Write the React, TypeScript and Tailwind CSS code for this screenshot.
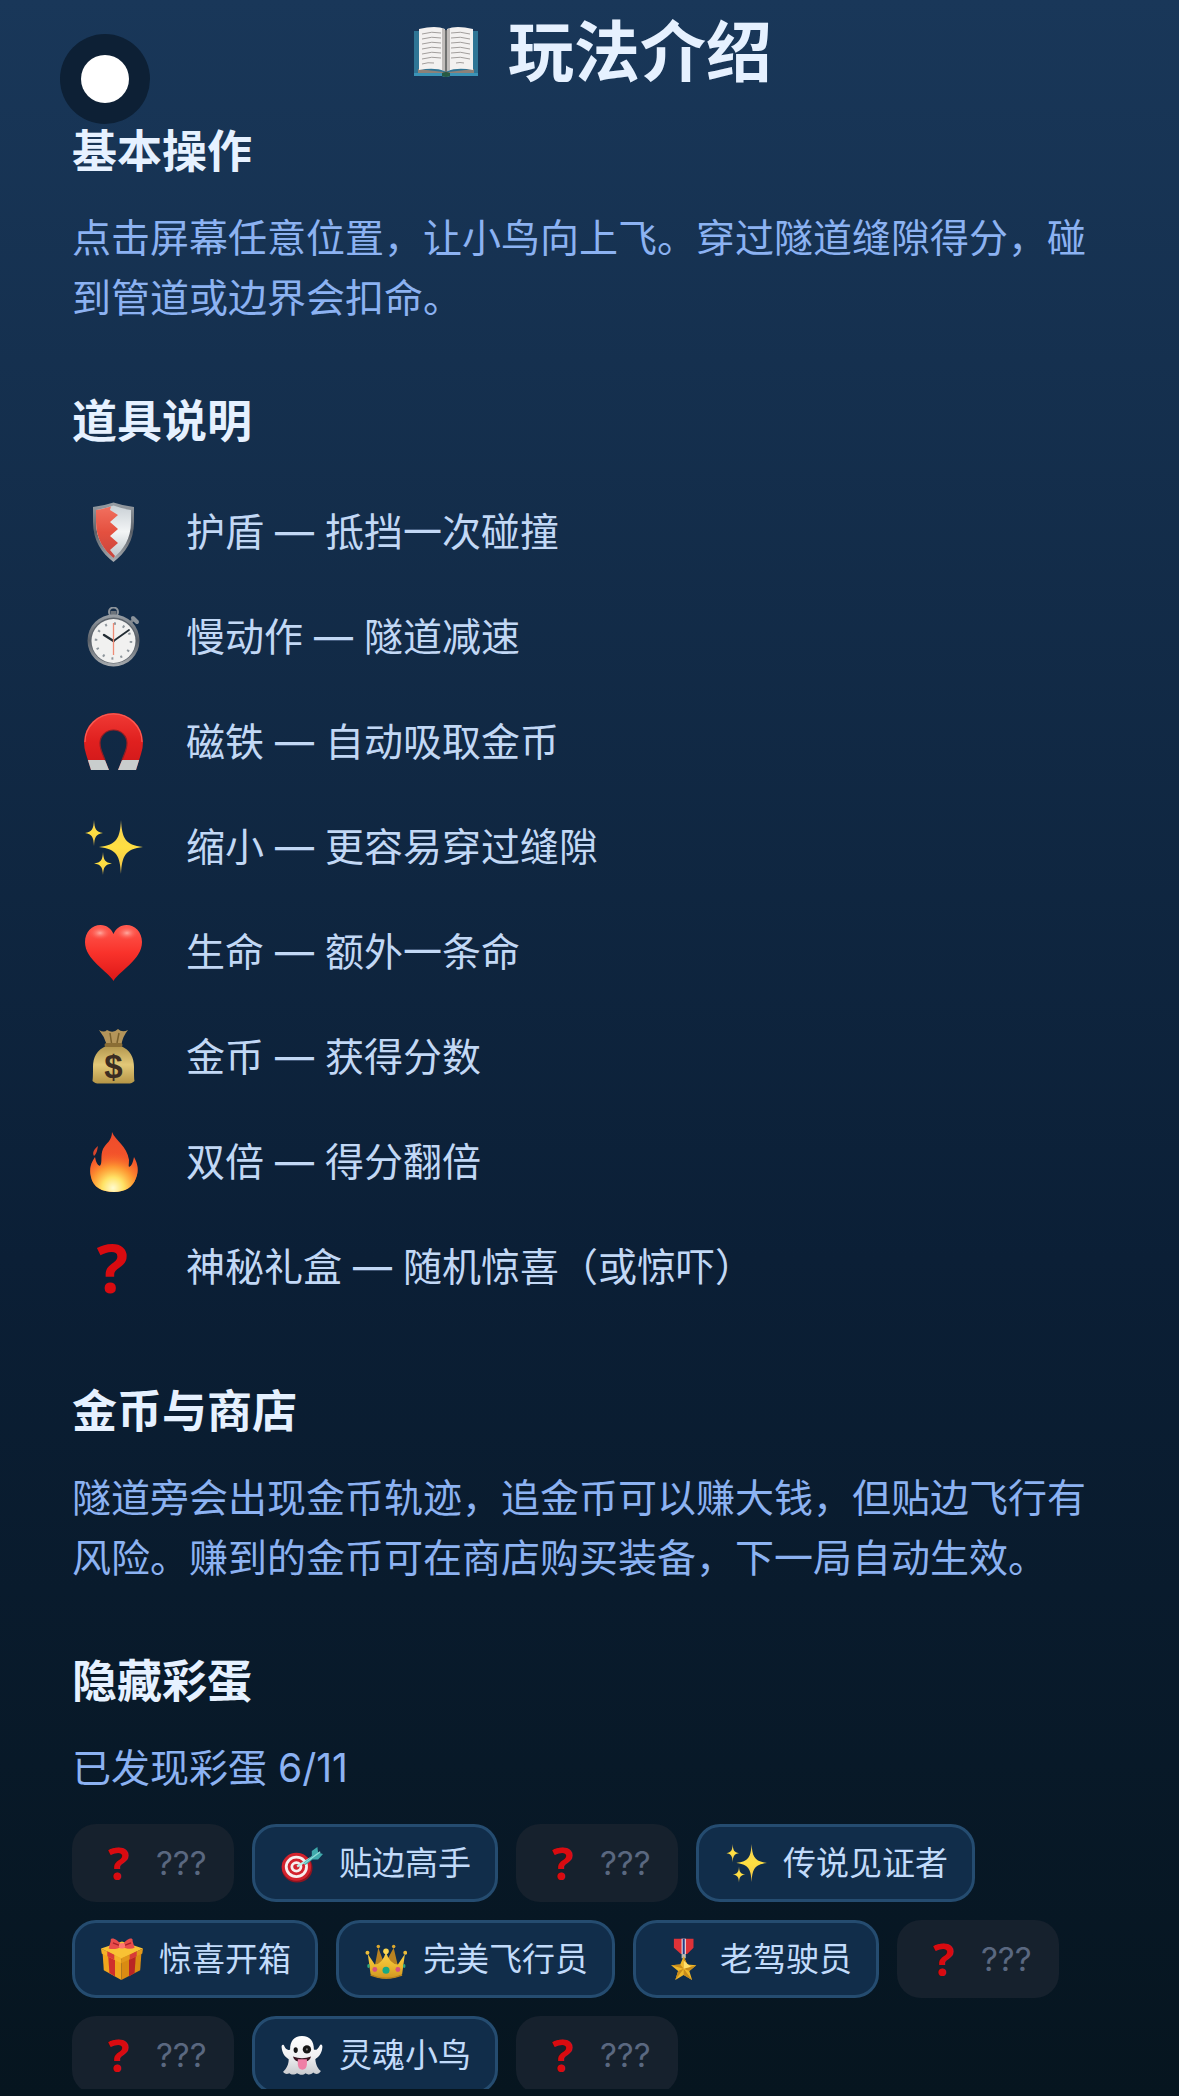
import type { ReactNode } from "react";

type IconName =
  | "shield"
  | "stopwatch"
  | "magnet"
  | "sparkles"
  | "heart"
  | "moneyBag"
  | "flame"
  | "question"
  | "target"
  | "gift"
  | "crown"
  | "medal"
  | "ghost";

interface PowerUp {
  icon: IconName;
  name: string;
  effect: string;
}

interface EasterEgg {
  id: number;
  icon: IconName;
  title: string | null;
}

const POWER_UPS: PowerUp[] = [
  { icon: "shield", name: "护盾", effect: "抵挡一次碰撞" },
  { icon: "stopwatch", name: "慢动作", effect: "隧道减速" },
  { icon: "magnet", name: "磁铁", effect: "自动吸取金币" },
  { icon: "sparkles", name: "缩小", effect: "更容易穿过缝隙" },
  { icon: "heart", name: "生命", effect: "额外一条命" },
  { icon: "moneyBag", name: "金币", effect: "获得分数" },
  { icon: "flame", name: "双倍", effect: "得分翻倍" },
  { icon: "question", name: "神秘礼盒", effect: "随机惊喜（或惊吓）" },
];

const EGGS: EasterEgg[] = [
  { id: 1, icon: "question", title: null },
  { id: 2, icon: "target", title: "贴边高手" },
  { id: 3, icon: "question", title: null },
  { id: 4, icon: "sparkles", title: "传说见证者" },
  { id: 5, icon: "gift", title: "惊喜开箱" },
  { id: 6, icon: "crown", title: "完美飞行员" },
  { id: 7, icon: "medal", title: "老驾驶员" },
  { id: 8, icon: "question", title: null },
  { id: 9, icon: "question", title: null },
  { id: 10, icon: "ghost", title: "灵魂小鸟" },
  { id: 11, icon: "question", title: null },
];

// All icons share a 60x60 grid.
const DRAWINGS: Record<Exclude<IconName, "question">, ReactNode> = {
  shield: (
    <>
      <path d="M10 5Q20 4 30.5 .5Q41 4 51 5V20C51 39 42 51 30.5 60C19 51 10 39 10 20Z" fill="url(#steel)" />
      <path d="M13 8Q21 7 30.5 3.5Q40 7 48 8V20C48 37 40 48 30.5 56C21 48 13 37 13 20Z" fill="url(#silver)" />
      <path
        d="M13 8Q20 7 28 4.5L27 8L35 13L27 20L35 27L27 34L35 41L27 48L32 54L30.5 56C21 48 13 37 13 20Z"
        fill="url(#coral)"
      />
    </>
  ),
  stopwatch: (
    <>
      <circle cx="30.5" cy="5" r="4.5" fill="none" stroke="#8d949b" strokeWidth="2" />
      <rect x="27.5" y="4" width="6" height="6" fill="#6c737b" />
      <path d="M46 17L52 11" stroke="#7b838b" strokeWidth="3" />
      <path d="M50 11L54 15" stroke="#8b939b" strokeWidth="4" strokeLinecap="round" />
      <circle cx="30.5" cy="33.5" r="26" fill="url(#steel)" />
      <circle cx="30.5" cy="33.5" r="23" fill="#5d646c" />
      <circle cx="30.5" cy="34" r="22" fill="#f1f1f0" />
      <circle cx="30.5" cy="34" r="17.5" fill="none" stroke="#8f979d" strokeWidth="2.5" strokeDasharray="2 7.16" />
      <path d="M30.5 34L46 23" stroke="#222c33" strokeWidth="1.8" strokeLinecap="round" />
      <path d="M30.5 34L21 28" stroke="#222c33" strokeWidth="2.4" strokeLinecap="round" />
      <path d="M30.5 16V48" stroke="#ee8b76" strokeWidth="1.3" />
    </>
  ),
  magnet: (
    <>
      <path
        d="M8 58L3 42Q1 36 1 30A29.5 29 0 0 1 60 30Q60 36 58 42L53 58H35L41 43Q44 36 44 31A13.5 13 0 0 0 17 31Q17 36 20 43L26 58Z"
        fill="url(#red)"
      />
      <path d="M4.9 48H22L26 58H8Z" fill="#c9cdcd" />
      <path d="M56.1 48H39L35 58H53Z" fill="#c9cdcd" />
      <path d="M22 48L20 43Q17 36 17 31A13.5 13 0 0 1 44 31Q44 36 41 43L39 48" fill="none" stroke="#8d1f24" strokeWidth="1.2" />
      <path d="M2 30A28.5 28 0 0 1 59 30" fill="none" stroke="#f75e56" strokeWidth="1.2" />
    </>
  ),
  sparkles: (
    <g fill="url(#gold)">
      <path d="M38 3C39 21 42 28 60 30C42 32 39 39 38 57C37 39 34 32 16 30C34 28 37 21 38 3Z" />
      <path d="M11 3C11.5 12 13 15 20 16C13 17 11.5 20 11 29C10.5 20 9 17 2 16C9 15 10.5 12 11 3Z" />
      <path d="M20 35C20.5 43 22 45.5 29 46.5C22 47.5 20.5 50 20 58C19.5 50 18 47.5 11 46.5C18 45.5 19.5 43 20 35Z" />
    </g>
  ),
  heart: (
    <>
      <path
        d="M30.5 59C25 49 2 38 2 20C2 10 9 3 17.5 3C24 3 28.5 7 30.5 12C32.5 7 37 3 43.5 3C52 3 59 10 59 20C59 38 36 49 30.5 59Z"
        fill="url(#heartRed)"
      />
      <ellipse cx="17" cy="11" rx="11" ry="7" fill="url(#shine)" />
      <ellipse cx="44" cy="11" rx="11" ry="7" fill="url(#shine)" />
    </>
  ),
  moneyBag: (
    <>
      <path d="M16 3Q21 6 24 3Q30 7 35 2Q39 6 45 3Q40 9 38.5 17H23.5Q21 9 16 3Z" fill="#b4955a" />
      <path d="M27 6L28.5 16M36 6L34 16" stroke="#79602d" strokeWidth="1.5" />
      <path
        d="M23 19C14 23 10 30 10 40C10 47 10 51 9.5 54Q12 57 18 56.5H43Q49 57 51.5 54C51 51 51 47 51 40C51 30 47 23 38 19Z"
        fill="url(#bag)"
      />
      <rect x="21.5" y="16" width="18" height="4" rx="2" fill="#8b6e35" />
      <text
        x="30.5"
        y="51"
        textAnchor="middle"
        fontSize="33"
        fontWeight="700"
        fill="#3b2c22"
        fontFamily="Liberation Sans, sans-serif"
      >
        $
      </text>
    </>
  ),
  flame: (
    <>
      <path
        d="M29 0C32 8 44 14 46 28C46 32 45 34 46 35C49 34 50 30 51 25C55 32 56 39 53 46C50 55 42 60 31 60C19 60 10 55 8 45C6 36 8 31 12 25C13 30 14 33 17 34C20 30 17 24 20 17C23 11 29 9 29 0Z"
        fill="url(#fire)"
      />
      <path d="M15 14C14 19 14 21 11 24C9 21 11 17 15 14Z" fill="#d9452b" />
      <path
        d="M29 0C32 8 44 14 46 28C46 32 45 34 46 35C49 34 50 30 51 25C55 32 56 39 53 46C50 55 42 60 31 60C19 60 10 55 8 45C6 36 8 31 12 25C13 30 14 33 17 34C20 30 17 24 20 17C23 11 29 9 29 0Z"
        fill="url(#fireGlow)"
      />
    </>
  ),
  target: (
    <>
      <ellipse cx="23" cy="37" rx="22" ry="21" fill="#8f1420" />
      <ellipse cx="22" cy="35.5" rx="21" ry="20" fill="#d3222d" />
      <ellipse cx="22" cy="35.5" rx="16.5" ry="16" fill="#f7eeee" />
      <ellipse cx="22" cy="35.5" rx="12.5" ry="12" fill="#d3222d" />
      <ellipse cx="22" cy="35.5" rx="8.5" ry="8" fill="#f7eeee" />
      <ellipse cx="22" cy="35.5" rx="4.5" ry="4" fill="#d3222d" />
      <path d="M23 35L46 21" stroke="#b9ece8" strokeWidth="3" />
      <path d="M32 30L44 20L44 13L52 7L53 15L60 17L53 25L45 25L35 33Z" fill="#3fa9ab" />
      <path d="M33 31L56 14" stroke="#8fdcd9" strokeWidth="2" />
    </>
  ),
  gift: (
    <>
      <path d="M2 18L29 31V60L4 46Z" fill="#f0a51d" />
      <path d="M58 18L29 31V60L56 46Z" fill="#d98b12" />
      <path d="M10 21L20 26V55L12 50Z" fill="#cf2e2c" />
      <path d="M50 21L40 26V55L48 50Z" fill="#b92524" />
      <path d="M0 15L30 5L60 15L29 30Z" fill="#f9c234" />
      <path d="M0 15L29 29V36L1 22Z" fill="#f5b128" />
      <path d="M60 15L29 29V36L59 22Z" fill="#e2981a" />
      <path d="M9 19L19 24V31L9 26ZM51 19L41 24V31L51 26Z" fill="#d83a37" />
      <path d="M30 12C22 -2 12 -1 14 4L11 15C17 17 25 15 30 12C35 15 42 17 48 14L45 4C47 -1 37 -2 30 12Z" fill="#e84c4b" />
      <path d="M30 12L17 7M30 12L43 7" stroke="#a82029" strokeWidth="2" />
      <ellipse cx="30" cy="11" rx="4.5" ry="4" fill="#ff7770" />
    </>
  ),
  crown: (
    <>
      <path d="M14 40L19 14L28 38L41 14L47 40Z" fill="#b98221" />
      <circle cx="19" cy="12" r="2.5" fill="#dba72f" />
      <circle cx="41" cy="12" r="2.5" fill="#dba72f" />
      <path d="M4 23L14 38Q25 37 30 20Q35 37 47 38L57 23L53 52Q30 64 8 52Z" fill="url(#crownGold)" />
      <circle cx="3.5" cy="21" r="2.8" fill="#edbd3a" />
      <circle cx="57.5" cy="21" r="2.8" fill="#edbd3a" />
      <circle cx="30" cy="19" r="4" fill="#f9d650" />
      <path d="M8 53Q30 62 53 53" stroke="#b9821c" strokeWidth="2" fill="none" />
      <circle cx="30" cy="46" r="5" fill="#18a983" />
      <circle cx="14" cy="45" r="3.5" fill="#d8527d" />
      <circle cx="47" cy="45" r="3.5" fill="#d8527d" />
      <ellipse cx="5" cy="40" rx="1.8" ry="3" fill="#2ca77e" />
      <ellipse cx="56" cy="40" rx="1.8" ry="3" fill="#2ca77e" />
    </>
  ),
  medal: (
    <>
      <path d="M17 1H45V14L36 23H27L17 14Z" fill="#de3238" />
      <path d="M28 1H34V23H28Z" fill="#e9edf2" />
      <path d="M29.5 1H32.5V23H29.5Z" fill="#283b83" />
      <path d="M28 23H34V29H28Z" fill="#b9b9b5" />
      <path d="M31 26L36 38L49 39L39 47L43 60L31 53L19 60L23 47L13 39L26 38Z" fill="#efb82a" />
      <path d="M31 26L36 38L31 44ZM49 39L39 47L31 44ZM43 60L31 53V44ZM19 60L23 47L31 44ZM13 39L26 38L31 44Z" fill="#c88b1b" />
      <path d="M31 32V44L41 41Z" fill="#ffe06b" />
    </>
  ),
  ghost: (
    <>
      <path
        d="M30 3C42 3 47 11 47 22C50 24 53 21 55 17C57 13 60 16 59 20C58 29 53 33 49 36C50 45 53 50 57 53C54 58 49 58 46 55C42 59 38 58 35 56C31 60 26 58 23 56C19 59 14 58 12 56C8 58 5 57 3 54C8 49 11 44 11 36C6 33 2 28 1 20C0 15 4 14 5 18C7 22 10 24 13 22C13 11 18 3 30 3Z"
        fill="url(#ghostWhite)"
      />
      <ellipse cx="21" cy="23" rx="3" ry="4" fill="#171717" />
      <circle cx="37" cy="22" r="6" fill="#171717" />
      <circle cx="37" cy="22" r="1.5" fill="#777" />
      <path d="M17 32Q30 37 43 32Q41 40 30 40T17 32Z" fill="#3a1722" />
      <path d="M24 36H37V44Q36 51 30.5 51T24 44Z" fill="#ef7fa6" />
    </>
  ),
};

// Gradients used by the icons, rendered once per page.
function IconGradients() {
  const stops: [string, string[]][] = [
    ["steel", ["#999fa5", "#5a6068", "#a9adb1"]],
    ["silver", ["#c9d0d5", "#f3f5f6", "#bcc5ca"]],
    ["coral", ["#f2705f", "#e4503f", "#c8463d"]],
    ["red", ["#f03a35", "#e0201f", "#cf1719"]],
    ["heartRed", ["#ff5a4f", "#f9322b", "#dd1717"]],
    ["gold", ["#f6ce55", "#ffdf42", "#f3c34a"]],
    ["bag", ["#b3974f", "#e2c878", "#b59546"]],
    ["fire", ["#ee4b2c", "#f4552a", "#fb7a2b"]],
    ["crownGold", ["#f7d14a", "#edb92f", "#cf9522"]],
    ["ghostWhite", ["#ffffff", "#f1f1f3", "#c8cace"]],
  ];
  return (
    <svg className="absolute h-0 w-0" aria-hidden="true">
      <defs>
        {stops.map(([id, colors]) => (
          <linearGradient key={id} id={id} x1="0" y1="0" x2="0" y2="1">
            <stop offset="0" stopColor={colors[0]} />
            <stop offset=".5" stopColor={colors[1]} />
            <stop offset="1" stopColor={colors[2]} />
          </linearGradient>
        ))}
        <radialGradient id="fireGlow" gradientUnits="userSpaceOnUse" cx="30" cy="56" r="36">
          <stop offset="0" stopColor="#fffbd0" />
          <stop offset=".3" stopColor="#ffe265" />
          <stop offset=".6" stopColor="#ffa033" stopOpacity=".85" />
          <stop offset="1" stopColor="#f8602a" stopOpacity="0" />
        </radialGradient>
        <radialGradient id="shine">
          <stop offset="0" stopColor="#ffc2b8" stopOpacity=".8" />
          <stop offset="1" stopColor="#ff5a4f" stopOpacity="0" />
        </radialGradient>
      </defs>
    </svg>
  );
}

function BookIcon() {
  return (
    <svg viewBox="0 0 64 50" className="w-16" aria-hidden="true">
      <path d="M0 4H64V49H36Q32 51 28 49H0Z" fill="#2f7595" />
      <path d="M0 46H64V49H36Q32 51 28 49H0Z" fill="#3b93b6" />
      <path d="M4 42L30 45H34L60 42V46H36Q32 49 28 46H4Z" fill="#8d8178" />
      <path d="M5 2Q22 -2 31 2V44Q20 40 5 43Z" fill="#f3f1f0" />
      <path d="M59 2Q42 -2 33 2V44Q44 40 59 43Z" fill="#f3f1f0" />
      <path d="M28 1Q30 1 32 4Q34 1 36 1V43Q34 43 32 46Q30 43 28 43Z" fill="#a9a5a3" opacity=".7" />
      <path d="M32 3V46" stroke="#6a6461" strokeWidth="1.5" />
      <path
        d="M8 7Q18 4 27 6M8 12Q18 9 27 11M8 17Q18 14 27 16M8 22Q18 19 27 21M8 27Q18 24 27 26M8 32Q18 29 27 31M8 37Q14 35 20 36M37 6Q46 4 56 7M37 11Q46 9 56 12M37 16Q46 14 56 17M37 21Q46 19 56 22M37 26Q46 24 56 27M37 31Q46 29 56 32M42 36Q46 35 50 36"
        fill="none"
        stroke="#a29e9c"
        strokeWidth="1"
      />
      <path d="M28 46Q32 44 36 46V49Q32 51 28 49Z" fill="#275a45" />
    </svg>
  );
}

function Icon({ name, small = false }: { name: IconName; small?: boolean }) {
  if (name === "question") {
    return (
      <span
        className={`font-['Open_Sans'] font-bold text-[#d90b10] ${
          small ? "text-[45px] leading-[42px]" : "text-[66px] leading-[60px]"
        }`}
      >
        ?
      </span>
    );
  }
  return (
    <svg viewBox="0 0 60 60" className={small ? "size-[42px]" : "size-[60px]"} aria-hidden="true">
      {DRAWINGS[name]}
    </svg>
  );
}

function Section({ title, children }: { title: string; children: ReactNode }) {
  return (
    <section className="flex flex-col gap-[26px]">
      <h2 className="text-[45px] leading-[60px] font-bold text-[#e6f1ff]">{title}</h2>
      {children}
    </section>
  );
}

function EggChip({ egg }: { egg: EasterEgg }) {
  const found = egg.title !== null;
  return (
    <li
      className={`flex h-[78px] items-center gap-[15px] rounded-3xl px-6 text-[33px] leading-[42px] ${
        found ? "border-3 border-[#254c70] bg-[#112d4a] text-[#c2dbfa]" : "bg-[#16212d] text-[#5a6880]"
      }`}
    >
      <span className="flex w-[45px] justify-center">
        <Icon name={egg.icon} small />
      </span>
      <span className="min-w-[54px]">{egg.title ?? "???"}</span>
    </li>
  );
}

export default function App() {
  const foundCount = EGGS.filter((egg) => egg.title !== null).length;

  return (
    <div className="relative flex h-screen flex-col overflow-hidden bg-linear-to-b/srgb from-[#193759] via-[#0b1f36] via-60% to-[#06151f] pb-[7px] font-['Inter','Noto_Sans_CJK_SC',sans-serif]">
      <IconGradients />

      <button
        type="button"
        aria-label="返回"
        className="absolute top-[34px] left-[60px] flex size-[90px] items-center justify-center rounded-full bg-[#0d2035]"
      >
        <span className="size-12 rounded-full bg-white" />
      </button>

      <header className="flex items-center justify-center gap-[23px] pt-3 pb-[30px]">
        <span className="flex w-[78px] justify-center">
          <BookIcon />
        </span>
        <h1 className="text-[66px] leading-[80px] font-bold text-[#e6f1ff]">玩法介绍</h1>
      </header>

      <main className="flex min-h-0 flex-1 flex-col gap-16 overflow-hidden px-[72px] text-[39px] leading-[60px] text-[#8cb2f2]">
        <Section title="基本操作">
          <p>点击屏幕任意位置，让小鸟向上飞。穿过隧道缝隙得分，碰到管道或边界会扣命。</p>
        </Section>

        <Section title="道具说明">
          <ul className="text-[#c2d8f5]">
            {POWER_UPS.map((item) => (
              <li key={item.name} className="flex items-center gap-[33px] pt-6 pb-[21px]">
                <span className="flex h-[60px] w-[81px] justify-center">
                  <Icon name={item.icon} />
                </span>
                <span>
                  {item.name} — {item.effect}
                </span>
              </li>
            ))}
          </ul>
        </Section>

        <Section title="金币与商店">
          <p>隧道旁会出现金币轨迹，追金币可以赚大钱，但贴边飞行有风险。赚到的金币可在商店购买装备，下一局自动生效。</p>
        </Section>

        <Section title="隐藏彩蛋">
          <p>
            已发现彩蛋 {foundCount}/{EGGS.length}
          </p>
          <ul className="flex flex-wrap gap-[18px]">
            {EGGS.map((egg) => (
              <EggChip key={egg.id} egg={egg} />
            ))}
          </ul>
        </Section>
      </main>
    </div>
  );
}
